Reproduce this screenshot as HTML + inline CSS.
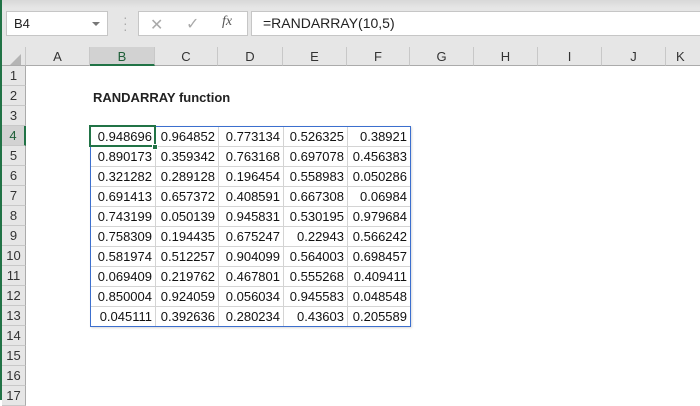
<!DOCTYPE html>
<html><head><style>
*{margin:0;padding:0;box-sizing:border-box}
body{width:700px;height:400px;overflow:hidden;background:#fff;font-family:"Liberation Sans",sans-serif;position:relative;color:#222}
.a{position:absolute}
.tb{left:0;top:0;width:700px;height:46px;background:#e6e6e6}
.box{background:#fff;border:1px solid #c6c6c6}
.ch{position:absolute;top:47px;height:19px;background:#e6e6e6;border-right:1px solid #c8c8c8;border-bottom:1px solid #ababab;font-size:13px;text-align:center;line-height:19px;color:#333}
.rh{position:absolute;left:2px;width:24px;height:20px;background:#e6e6e6;border-bottom:1px solid #c8c8c8;border-right:1px solid #ababab;font-size:13px;text-align:center;line-height:20px;color:#333}
table{position:absolute;left:90px;top:126px;border-collapse:collapse;font-size:13px}
td{border:1px solid #d4d4d4;height:20px;text-align:right;padding:0 3px;line-height:18px;color:#111}
</style></head><body>
<div class="a tb"></div>
<div class="a" style="left:0;top:0;width:700px;height:8px;background:linear-gradient(#d8d8d8,#e6e6e6)"></div>
<div class="a box" style="left:6px;top:11px;width:102px;height:25px;font-size:13px;line-height:23px;padding-left:7px">B4</div>
<div class="a" style="left:92px;top:22px;width:0;height:0;border-left:4px solid transparent;border-right:4px solid transparent;border-top:4px solid #777"></div>
<div class="a" style="left:123px;top:14px;color:#aaa;font-size:14px;line-height:6px">·<br>·<br>·</div>
<div class="a box" style="left:138px;top:11px;width:110px;height:25px"></div>
<div class="a" style="left:150px;top:15px;color:#aaa;font-size:16px">✕</div>
<div class="a" style="left:186px;top:14px;color:#aaa;font-size:16px">✓</div>
<div class="a" style="left:222px;top:14px;color:#555;font-size:14px;font-style:italic;font-family:'Liberation Serif',serif">fx</div>
<div class="a box" style="left:251px;top:11px;width:460px;height:25px;font-size:14px;line-height:23px;padding-left:11px">=RANDARRAY(10,5)</div>
<div class="a" style="left:0;top:36px;width:700px;height:11px;background:#e6e6e6"></div>
<div class="a" style="left:0;top:0;width:2px;height:400px;background:#217346"></div>
<div class="ch" style="left:2px;width:24px"></div>
<div class="a" style="left:10px;top:54px;width:0;height:0;border-left:11px solid transparent;border-bottom:11px solid #b4b4b4"></div>
<div class="ch" style="left:26px;width:64px">A</div>
<div class="ch" style="left:90px;width:65px;background:#d2d2d2;border-bottom:2px solid #217346;color:#1e5e38">B</div>
<div class="ch" style="left:155px;width:63px">C</div>
<div class="ch" style="left:218px;width:65px">D</div>
<div class="ch" style="left:283px;width:64px">E</div>
<div class="ch" style="left:347px;width:63px">F</div>
<div class="ch" style="left:410px;width:64px">G</div>
<div class="ch" style="left:474px;width:64px">H</div>
<div class="ch" style="left:538px;width:64px">I</div>
<div class="ch" style="left:602px;width:64px">J</div>
<div class="ch" style="left:666px;width:40px;text-align:left;padding-left:10px">K</div>
<div class="rh" style="top:66px">1</div>
<div class="rh" style="top:86px">2</div>
<div class="rh" style="top:106px">3</div>
<div class="rh" style="top:126px;background:#d2d2d2;border-right:2px solid #217346;color:#1e5e38">4</div>
<div class="rh" style="top:146px">5</div>
<div class="rh" style="top:166px">6</div>
<div class="rh" style="top:186px">7</div>
<div class="rh" style="top:206px">8</div>
<div class="rh" style="top:226px">9</div>
<div class="rh" style="top:246px">10</div>
<div class="rh" style="top:266px">11</div>
<div class="rh" style="top:286px">12</div>
<div class="rh" style="top:306px">13</div>
<div class="rh" style="top:326px">14</div>
<div class="rh" style="top:346px">15</div>
<div class="rh" style="top:366px">16</div>
<div class="rh" style="top:386px">17</div>
<div class="a" style="left:93px;top:89px;font-size:13px;font-weight:bold;line-height:18px">RANDARRAY function</div>
<table>
<colgroup><col style="width:65px"><col style="width:63px"><col style="width:65px"><col style="width:64px"><col style="width:63px"></colgroup>
<tr><td>0.948696</td><td>0.964852</td><td>0.773134</td><td>0.526325</td><td>0.38921</td></tr>
<tr><td>0.890173</td><td>0.359342</td><td>0.763168</td><td>0.697078</td><td>0.456383</td></tr>
<tr><td>0.321282</td><td>0.289128</td><td>0.196454</td><td>0.558983</td><td>0.050286</td></tr>
<tr><td>0.691413</td><td>0.657372</td><td>0.408591</td><td>0.667308</td><td>0.06984</td></tr>
<tr><td>0.743199</td><td>0.050139</td><td>0.945831</td><td>0.530195</td><td>0.979684</td></tr>
<tr><td>0.758309</td><td>0.194435</td><td>0.675247</td><td>0.22943</td><td>0.566242</td></tr>
<tr><td>0.581974</td><td>0.512257</td><td>0.904099</td><td>0.564003</td><td>0.698457</td></tr>
<tr><td>0.069409</td><td>0.219762</td><td>0.467801</td><td>0.555268</td><td>0.409411</td></tr>
<tr><td>0.850004</td><td>0.924059</td><td>0.056034</td><td>0.945583</td><td>0.048548</td></tr>
<tr><td>0.045111</td><td>0.392636</td><td>0.280234</td><td>0.43603</td><td>0.205589</td></tr>
</table>
<div class="a" style="left:90px;top:126px;width:321px;height:201px;border:1px solid #3c6fce;box-shadow:1px 1px 2px rgba(0,0,0,0.15)"></div>
<div class="a" style="left:89px;top:125px;width:67px;height:22px;border:2px solid #217346"></div>
<div class="a" style="left:152px;top:144px;width:6px;height:6px;background:#217346;border:1px solid #fff"></div>
</body></html>
